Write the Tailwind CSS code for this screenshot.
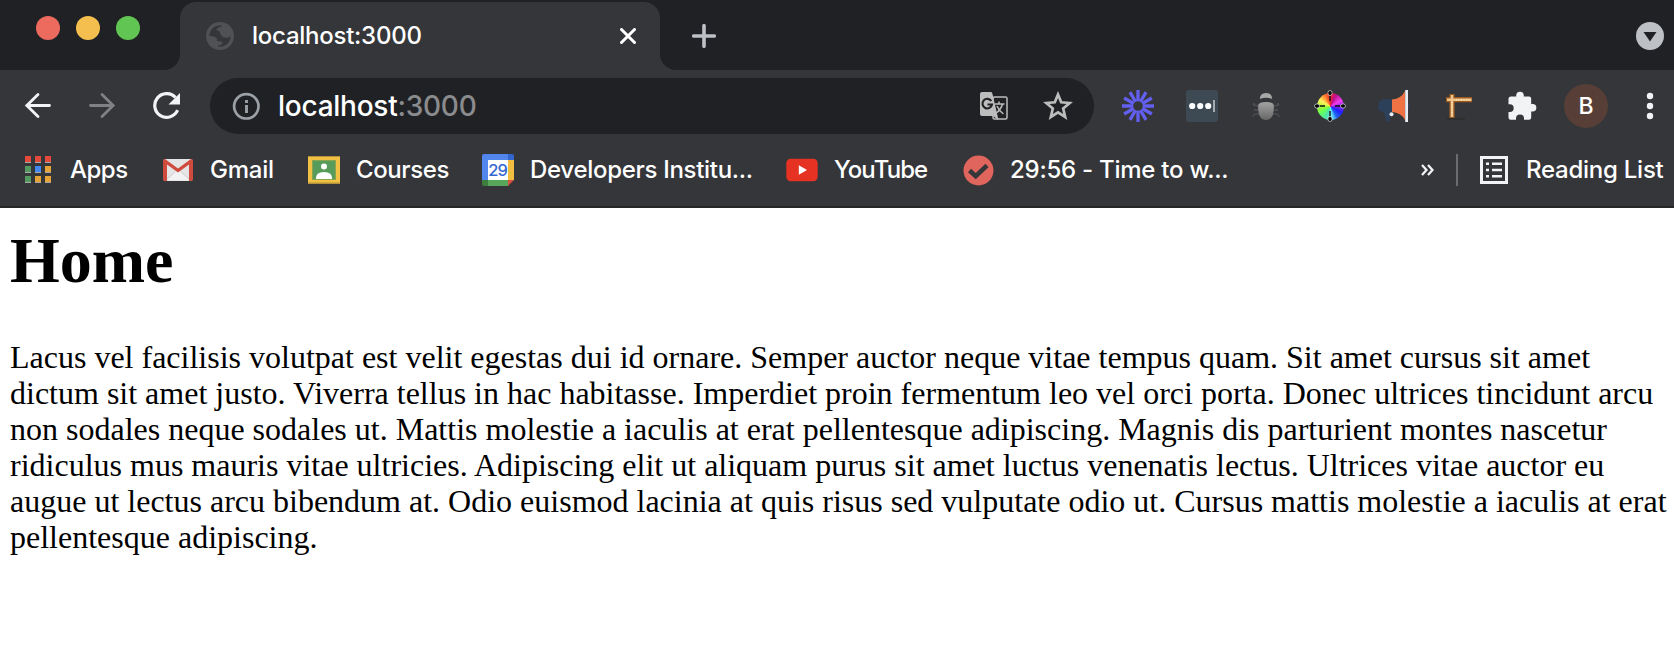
<!DOCTYPE html>
<html lang="en">
<head>
<meta charset="utf-8">
<title>localhost:3000</title>
<script src="https://cdn.jsdelivr.net/npm/@tailwindcss/browser@4"></script>
</head>
<body class="w-[1674px] h-[656px] overflow-hidden bg-white text-black">
<header class="h-[208px] bg-[#35363a] border-b-2 border-[#272728] text-white font-['Inter',sans-serif] font-medium text-[24px] leading-[32px] tracking-[-0.25px]">
  <!-- Tab strip -->
  <div class="h-[70px] flex bg-[#202124]">
    <div class="w-[164px] flex gap-4 pl-9 pt-4">
      <span class="size-6 rounded-full bg-[#ec6a5e]"></span>
      <span class="size-6 rounded-full bg-[#f4bf4f]"></span>
      <span class="size-6 rounded-full bg-[#61c554]"></span>
    </div>
    <div class="w-4 bg-[#35363a]"><div class="h-full bg-[#202124] rounded-br-[16px]"></div></div>
    <div class="w-[480px] bg-[#202124] pt-[2px]">
      <div class="h-[68px] bg-[#35363a] rounded-t-[16px] flex items-center pl-[26px] pr-6">
        <svg class="size-7" viewBox="0 0 28 28"><circle cx="14" cy="14" r="14" fill="#505155"/><path d="M3.300 14A10.700 10.700 0 0 1 16 3.500C15.500 5.500 11.500 5 10.500 7.500C10.500 9 13.500 8.500 14 10C13.500 12 16.500 14 17.500 15.500H20C21.500 16.500 23 15 24.700 14A10.700 10.700 0 0 1 12 24.600V23.500C14.500 23.500 16.500 22.500 16.500 20.500C15.500 19 12 20 11 18.500C11.500 15.500 9 14 3.300 14Z" fill="#35363a"/></svg>
        <span class="ml-[18px] whitespace-nowrap">localhost:3000</span>
        <svg class="size-4 ml-auto" viewBox="0 0 16 16"><path d="M1.500 1.500L14.500 14.500M14.500 1.500L1.500 14.500" stroke="#fff" stroke-width="3" stroke-linecap="round"/></svg>
      </div>
    </div>
    <div class="w-4 bg-[#35363a]"><div class="h-full bg-[#202124] rounded-bl-[16px]"></div></div>
    <svg class="size-6 mt-6 ml-4" viewBox="0 0 24 24"><path d="M12 1.700V22.300M1.700 12H22.300" stroke="#bdc1c6" stroke-width="3.600" stroke-linecap="round"/></svg>
    <svg class="size-7 mt-[22px] ml-auto mr-[10px]" viewBox="0 0 28 28"><circle cx="14" cy="14" r="14" fill="#bdc1c6"/><path d="M7.500 10H20.500L14 19.500Z" fill="#202124"/></svg>
  </div>

  <!-- Toolbar -->
  <div class="h-[72px] flex items-center">
    <svg class="w-7 h-7 ml-6" viewBox="0 0 28 28"><path d="M25.500 13.500H3M14 2.500L2.800 13.500L14 24.500" fill="none" stroke="#f1f3f4" stroke-width="2.800" stroke-linecap="round"/></svg>
    <svg class="w-7 h-7 ml-9" viewBox="0 0 28 28"><path d="M2.500 13.500H25M14 2.500L25.200 13.500L14 24.500" fill="none" stroke="#808184" stroke-width="2.800" stroke-linecap="round"/></svg>
    <svg class="w-7 h-7 ml-9" viewBox="0 0 28 28"><path d="M25.600 18.200A11.900 11.900 0 1 1 23.500 5.500" fill="none" stroke="#f1f3f4" stroke-width="3.200"/><path d="M28 1V12.500H16.500Z" fill="#f1f3f4"/></svg>
    <div class="w-[884px] h-14 ml-[30px] rounded-full bg-[#202124] flex items-center pl-[22px] pr-[21px] text-[28px]">
      <svg class="size-7" viewBox="0 0 28 28"><circle cx="14.300" cy="14.300" r="12.200" fill="none" stroke="#9aa0a6" stroke-width="2.700"/><path d="M14.500 8V11M14.500 13V21" stroke="#9aa0a6" stroke-width="2.900"/></svg>
      <span class="ml-[18px] whitespace-nowrap">localhost<span class="text-[#8a8b8d]">:3000</span></span>
      <svg class="size-7 ml-auto" viewBox="0 0 28 28"><rect x="13" y="5" width="14" height="22" rx="1.500" fill="none" stroke="#bdbdbd" stroke-width="1.500"/><path d="M2 0H11Q12 0 12.500 2L18.500 28L13 24H2Q0 24 0 22V2Q0 0 2 0Z" fill="#bdbdbd"/><path d="M11.300 9A4.800 4.800 0 1 0 12 12.500H7.500" fill="none" stroke="#202124" stroke-width="2.100"/><path d="M14.500 12H24.500M19 9.500V12M22.500 12Q21 18 15 22M17 14Q19 19 23.500 22" fill="none" stroke="#bdbdbd" stroke-width="1.500"/></svg>
      <svg class="w-[30px] h-[30px] ml-[35px]" viewBox="0 0 30 30"><path d="M15 3.500L18.200 11.300L26.700 12L20.200 17.500L22.200 26L15 21.400L7.800 26L9.800 17.500L3.300 12L11.800 11.300Z" fill="none" stroke="#bdbdbd" stroke-width="2.700"/></svg>
    </div>
    <div class="flex items-center gap-8 ml-7">
      <svg class="size-8" viewBox="-16 -16 32 32" stroke="#635ff0" stroke-width="3.300"><path id="ray" d="M0 -16V-5.500M0 5.500V16"/><use href="#ray" transform="rotate(30)"/><use href="#ray" transform="rotate(60)"/><use href="#ray" transform="rotate(90)"/><use href="#ray" transform="rotate(120)"/><use href="#ray" transform="rotate(150)"/><circle r="5.500" fill="none" stroke-width="1.300"/></svg>
      <svg class="size-8" viewBox="0 0 32 32"><rect width="32" height="32" rx="3" fill="#3e4a53"/><g fill="#fff"><circle cx="6.200" cy="16" r="3.100"/><circle cx="14.200" cy="16" r="3.100"/><circle cx="22.200" cy="16" r="3.100"/></g><path d="M28 10V22" stroke="#bfc3c6" stroke-width="1.600"/></svg>
      <svg class="size-8" viewBox="0 0 32 32"><defs><linearGradient id="bug" x2="0" y2="1"><stop stop-color="#a3a3a3"/><stop offset="1" stop-color="#666"/></linearGradient></defs><path d="M5 14Q3 13 3.500 15L8 16M4 20H8M3 27Q3 23 9 24M27 14Q29 13 28.500 15L24 16M28 20H24M29 27Q29 23 23 24" fill="none" stroke="#505154" stroke-width="1.300"/><path d="M9.800 9Q10 3 16 3T22.200 9Q16 6.500 9.800 9Z" fill="#a8a8a8"/><path d="M8.200 15Q9 12 16 12T23.800 15Q24.500 30 16 30T8.200 15Z" fill="url(#bug)"/></svg>
      <div class="relative size-8 flex items-center justify-center">
        <div class="size-[27px] rounded-full bg-[conic-gradient(#ee2030,#c01090_7%,#f040f0_17%,#a020f0_23%,#2020ff_33%,#2060f0_41%,#70ffff_49%,#50e0b0_56%,#60ff60_65%,#a0ff30_74%,#fff060_84%,#ff9030_91%,#ee2030)]"></div>
        <svg class="absolute inset-0 size-8" viewBox="0 0 32 32"><path d="M16 6V11M16 21V26M5 16H11M21 16H27" stroke="#111" stroke-width="1.400"/><g fill="#000" stroke="#ccc" stroke-width=".8"><rect x="14" y=".5" width="4" height="5" rx="2"/><rect x="14" y="26.500" width="4" height="5" rx="2"/><rect x=".5" y="14" width="5" height="4" rx="2"/><rect x="26.500" y="14" width="5" height="4" rx="2"/></g></svg>
      </div>
      <svg class="size-8" viewBox="0 0 32 32"><path d="M14 9H7Q0 10 0 16T6 22L8 31Q10 32.500 12 31L12 22H14Z" fill="#2c405a"/><path d="M30 13Q33 16 30 19" fill="#2c405a"/><path d="M14 9.500Q23 9 27 1V30Q23 22.500 14 22Z" fill="#ef7245"/><path d="M28.600 0V32" stroke="#e6edf5" stroke-width="2.800"/><circle cx="13.500" cy="24.200" r="2" fill="#e6edf5"/></svg>
      <svg class="size-8" viewBox="0 0 32 32"><path d="M5 29H23" stroke="#2c2b2b" stroke-width="2" opacity=".6"/><path d="M10 4V28M4 9.700H30" stroke="#9b5a20" stroke-width="5.200"/><path d="M10 5V27M5 9.700H29.500" stroke="#f0c58c" stroke-width="2.600"/><path d="M10 12V27M14 9.700H29" stroke="#fff0c8" stroke-width="1" stroke-dasharray="1 1.500"/></svg>
      <svg class="size-8" viewBox="0 0 32 32"><path d="M5 6.500H10.200V5.500A3.500 3.500 0 0 1 17.800 5.500V6.500H23A2.200 2.200 0 0 1 25.200 8.700V14H26.600A3.600 3.600 0 0 1 26.600 21.500H25.200V27.500A2.200 2.200 0 0 1 23 29.700H18V28.500A3.800 3.800 0 0 0 10 28.500V29.700H4.700A2.200 2.200 0 0 1 2.500 27.500V22H3.800A3.900 3.900 0 0 0 3.800 14.200H2.500V9Q2.500 6.500 5 6.500Z" fill="#f1f3f4"/></svg>
      <div class="size-11 -mx-[6px] rounded-full bg-[#573f37] flex items-center justify-center text-[23px]">B</div>
      <svg class="size-8" viewBox="0 0 32 32" fill="#f1f3f4"><circle cx="16" cy="6" r="3.200"/><circle cx="16" cy="16" r="3.200"/><circle cx="16" cy="26" r="3.200"/></svg>
    </div>
  </div>

  <!-- Bookmarks bar -->
  <div class="h-14 flex items-center whitespace-nowrap">
    <div class="w-[137px] pl-[25px] flex items-center">
      <svg class="w-[26px] h-7 mr-[19px]" viewBox="0 0 26 28"><path d="M0 6.500H26M0 16.500H26M0 26.500H26" stroke="#aaa9a8" stroke-width="1" stroke-dasharray="6 4"/><path d="M0 0H6V6H0ZM10 0H16V6H10ZM20 0H26V6H20Z" fill="#e34a3c"/><path d="M0 10H6V16H0ZM0 20H6V26H0Z" fill="#549a60"/><path d="M10 10H16V16H10Z" fill="#4688f1"/><path d="M20 10H26V16H20ZM10 20H16V26H10ZM20 20H26V26H20Z" fill="#e6a338"/></svg>
      <span class="tracking-[-0.5px]">Apps</span>
    </div>
    <div class="w-[145px] pl-[25px] flex items-center">
      <svg class="w-8 h-6 mr-4" viewBox="0 0 32 24"><rect x="1.500" y="1" width="29" height="22" rx="2" fill="#e5e5e5"/><path d="M5 22L16 11L27 22Z" fill="#f3f3f3"/><path d="M5 21L13 14M27 21L19 14" stroke="#cfcfcf"/><path d="M1 3Q1 1 3 1L16 10.500L29 1Q31 1 31 3V21Q31 23 29 23H27V6.500L16 14.500L5 6.500V23H3Q1 23 1 21Z" fill="#cf4b3e"/></svg>
      <span>Gmail</span>
    </div>
    <div class="w-[174px] pl-[26px] flex items-center">
      <svg class="w-8 h-7 mr-4" viewBox="0 0 32 28"><rect width="32" height="28" fill="#b3923a"/><rect y="1" width="32" height="25.500" fill="#f0c143"/><rect x="4" y="4" width="24" height="20" fill="#8ba54a"/><rect x="5" y="5" width="22" height="18" fill="#579c5b"/><circle cx="16" cy="10.500" r="3" fill="#fff"/><path d="M8 22Q8 16 16 16T24 22V23H8Z" fill="#fff"/></svg>
      <span class="tracking-[-0.4px]">Courses</span>
    </div>
    <div class="w-[304px] pl-[26px] flex items-center">
      <svg class="size-8 mr-4" viewBox="0 0 32 32"><path d="M2 0H26V6H6V26H0V2Q0 0 2 0Z" fill="#5186ec"/><path d="M26 0H30Q32 0 32 2V6H26Z" fill="#3366cc"/><path d="M26 6H32V26H26Z" fill="#f2be42"/><path d="M0 26H6V32H2Q0 32 0 30Z" fill="#3c7d3e"/><path d="M6 26H26V32H6Z" fill="#58a55c"/><path d="M26 26H32L26 32Z" fill="#d95040"/><rect x="6" y="6" width="20" height="20" fill="#fff"/><text x="15.600" y="22" text-anchor="middle" font-family="Inter,sans-serif" font-size="16.500" font-weight="500" letter-spacing="-1" fill="#3568d0">29</text></svg>
      <span class="tracking-[-0.3px]">Developers Institu...</span>
    </div>
    <div class="w-[177px] pl-[26px] flex items-center">
      <svg class="w-8 h-6 mr-4" viewBox="0 0 32 24"><rect x=".3" y=".8" width="31.400" height="22.400" rx="4.500" fill="#e63223"/><path d="M12.800 7.200L21 12L12.800 16.800Z" fill="#fff"/></svg>
      <span class="tracking-[-0.9px]">YouTube</span>
    </div>
    <div class="pl-[26px] flex items-center">
      <svg class="size-[31px] mr-4" viewBox="0 0 31 31"><circle cx="15.500" cy="15.500" r="15" fill="#df655d"/><path d="M6.500 15.500L12.700 21.200L24 10.500" fill="none" stroke="#35363a" stroke-width="4.500"/></svg>
      <span>29:56 - Time to w...</span>
    </div>
    <div class="ml-auto w-[253px] flex items-center">
      <svg class="w-[13px] h-3" viewBox="0 0 13 12"><path d="M1 1L5.500 6L1 11M7 1L11.500 6L7 11" fill="none" stroke="#f1f3f4" stroke-width="2.300"/></svg>
      <span class="w-[2px] h-8 bg-[#6b6c6f] ml-[22px]"></span>
      <svg class="size-7 ml-[22px] mr-[18px]" viewBox="0 0 28 28"><rect x="1.500" y="1.500" width="25" height="25" fill="none" stroke="#f1f3f4" stroke-width="3"/><path d="M6 7.700H9M12 7.700H22M6 14H9M12 14H22M6 20.300H9M12 20.300H22" stroke="#f1f3f4" stroke-width="2.600"/></svg>
      <span>Reading List</span>
    </div>
  </div>
</header>

<main class="font-['Liberation_Serif',serif] pl-[10px]">
  <h1 class="text-[64px] leading-[74px] font-bold pt-[16px]">Home</h1>
  <p class="text-[32px] leading-[36px] mt-[41px] whitespace-nowrap">
    Lacus vel facilisis volutpat est velit egestas dui id ornare. Semper auctor neque vitae tempus quam. Sit amet cursus sit amet<br>
    dictum sit amet justo. Viverra tellus in hac habitasse. Imperdiet proin fermentum leo vel orci porta. Donec ultrices tincidunt arcu<br>
    non sodales neque sodales ut. Mattis molestie a iaculis at erat pellentesque adipiscing. Magnis dis parturient montes nascetur<br>
    ridiculus mus mauris vitae ultricies. Adipiscing elit ut aliquam purus sit amet luctus venenatis lectus. Ultrices vitae auctor eu<br>
    augue ut lectus arcu bibendum at. Odio euismod lacinia at quis risus sed vulputate odio ut. Cursus mattis molestie a iaculis at erat<br>
    pellentesque adipiscing.
  </p>
</main>
</body>
</html>
